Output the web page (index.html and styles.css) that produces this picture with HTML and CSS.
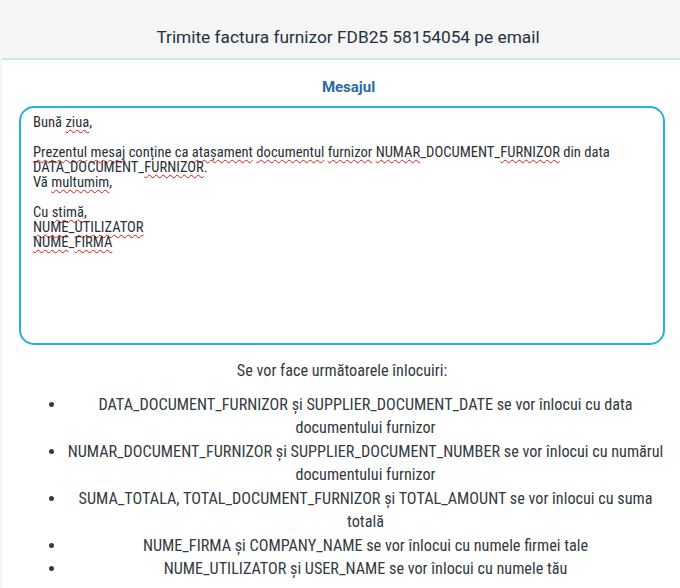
FILE: index.html
```html
<!DOCTYPE html>
<html lang="ro">
<head>
<meta charset="utf-8">
<link rel="stylesheet" href="styles.css">
</head>
<body>
<div class="modal">
  <header class="modal-header">
    <h1 class="modal-title">Trimite factura furnizor FDB25 58154054 pe email</h1>
  </header>
  <main class="modal-body">
    <div class="field-label">Mesajul</div>
    <div class="message-box"><div class="message-text">Bună <span class="sp">ziua</span>,

<span class="sp">Prezentul</span> <span class="sp">mesaj</span> conține ca <span class="sp">atașament</span> <span class="sp">documentul</span> <span class="sp">furnizor</span> <span class="sp">NUMAR</span>_DOCUMENT_<span class="sp">FURNIZOR</span> din data DATA_DOCUMENT_<span class="sp">FURNIZOR</span>.
Vă <span class="sp">multumim</span>,

Cu <span class="sp">stimă</span>,
<span class="sp">NUME</span>_<span class="sp">UTILIZATOR</span>
<span class="sp">NUME</span>_<span class="sp">FIRMA</span></div></div>
    <p class="replace-intro">Se vor face următoarele înlocuiri:</p>
    <ul class="replace-list">
      <li>DATA_DOCUMENT_FURNIZOR și SUPPLIER_DOCUMENT_DATE se vor înlocui cu data documentului furnizor</li>
      <li>NUMAR_DOCUMENT_FURNIZOR și SUPPLIER_DOCUMENT_NUMBER se vor înlocui cu numărul documentului furnizor</li>
      <li>SUMA_TOTALA, TOTAL_DOCUMENT_FURNIZOR și TOTAL_AMOUNT se vor înlocui cu suma totală</li>
      <li>NUME_FIRMA și COMPANY_NAME se vor înlocui cu numele firmei tale</li>
      <li>NUME_UTILIZATOR și USER_NAME se vor înlocui cu numele tău</li>
    </ul>
  </main>
</div>
</body>
</html>
```
FILE: styles.css
```css
html, body {
  margin: 0;
  padding: 0;
  height: 100%;
  background: #f5f5f5;
  overflow: hidden;
}
body {
  font-family: "Roboto Condensed", Roboto, "Noto Sans", sans-serif;
  color: #333a40;
}
.modal {
  margin-left: 2px;
  background: #ffffff;
  min-height: 100%;
}
.modal-header {
  background: #f5f5f5;
  border-bottom: 2px solid #c8e5ee;
  padding: 25px 0 9px 14px;
}
.modal-title {
  margin: 0;
  font-family: Roboto, "Noto Sans", sans-serif;
  font-size: 17.3px;
  line-height: 24px;
  font-weight: 400;
  text-align: center;
  color: #243240;
}
.modal-body {
  padding: 17px 15px 0 17px;
}
.field-label {
  text-align: center;
  padding-left: 13px;
  font-family: Roboto, "Noto Sans", sans-serif;
  font-size: 15px;
  line-height: 20px;
  font-weight: 700;
  color: #2d6aa0;
  margin-bottom: 9px;
}
.message-box {
  border: 2px solid #26b1d6;
  border-radius: 15px;
  padding: 7px 12px;
  box-sizing: border-box;
  height: 239px;
}
.message-text {
  white-space: pre-wrap;
  font-size: 14.6px;
  line-height: 15px;
  color: #2a2f35;
}
.sp {
  text-decoration: underline wavy #e01515;
  text-decoration-thickness: 1px;
  text-underline-offset: 2px;
  text-decoration-skip-ink: none;
}
.replace-intro {
  margin: 14px 0 10px;
  text-align: center;
  font-size: 16.2px;
  line-height: 23.5px;
  color: #333a40;
}
.replace-list {
  margin: 0;
  padding-left: 47px;
  text-align: center;
  font-size: 16.2px;
  line-height: 23.5px;
  color: #333a40;
}
```
